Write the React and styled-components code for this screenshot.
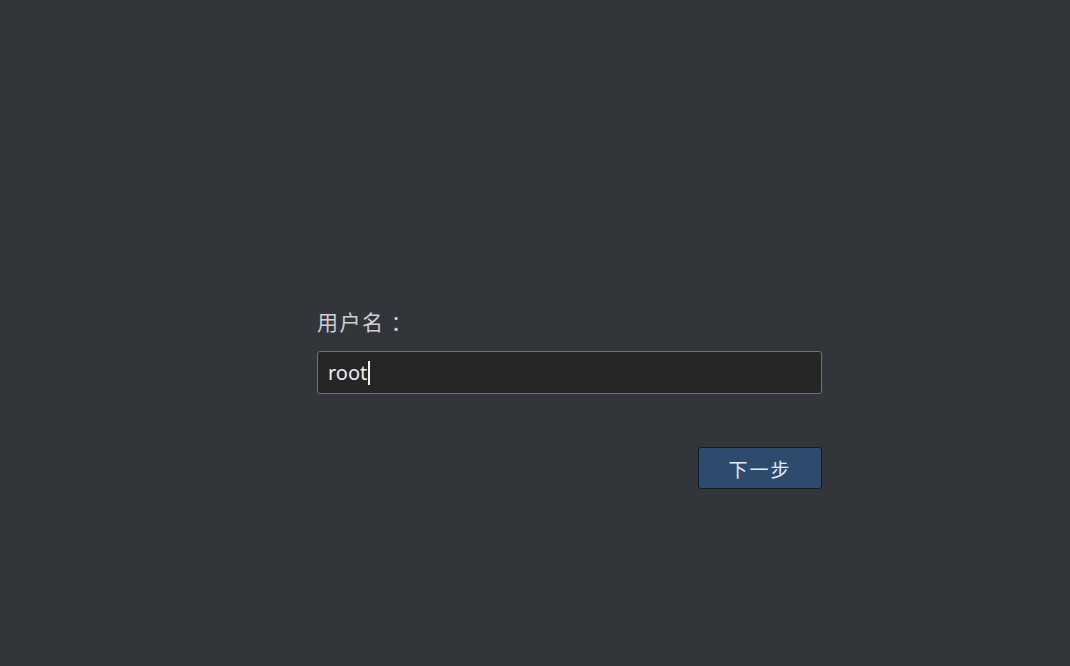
import styled, { createGlobalStyle } from 'styled-components'

const Global = createGlobalStyle`
    html, body {
        margin: 0;
        padding: 0;
        background: #32363b;
    }
    * { box-sizing: border-box; }
`

const Page = styled.div`
    width: 1070px;
    height: 666px;
    background: #32363b;
    padding: 307px 0 0 317px;
    font-family: "Noto Sans CJK SC", "Liberation Sans", sans-serif;
`

const Form = styled.div`
    width: 505px;
    display: flex;
    flex-direction: column;
`

const Label = styled.div`
    color: #cfcfcf;
    font-size: 21px;
    line-height: 28px;
    letter-spacing: 1.5px;
    margin-bottom: 16px;
    white-space: pre;
`

const Field = styled.div`
    height: 43px;
    background: #262626;
    border: 1px solid #707070;
    border-radius: 3px;
    display: flex;
    align-items: center;
    padding-left: 10px;
    color: #ececec;
    font-family: "Noto Sans", "DejaVu Sans", sans-serif;
    font-size: 20px;
`

const Caret = styled.span`
    display: inline-block;
    width: 2px;
    height: 24px;
    background: #f2f2f2;
    margin-left: 1px;
`

const Actions = styled.div`
    display: flex;
    justify-content: flex-end;
    margin-top: 53px;
`

const Button = styled.button`
    width: 124px;
    height: 42px;
    background: #2d4b6f;
    border: 1px solid #16191c;
    border-radius: 3px;
    color: #e6e9ee;
    font-family: "Noto Sans CJK SC", sans-serif;
    font-size: 19px;
    letter-spacing: 2px;
    padding: 0;
`

const App = () => {
    return (
        <Page>
            <Global />
            <Form>
                <Label>用户名 ：</Label>
                <Field>
                    root<Caret />
                </Field>
                <Actions>
                    <Button>下一步</Button>
                </Actions>
            </Form>
        </Page>
    )
}

export default App
